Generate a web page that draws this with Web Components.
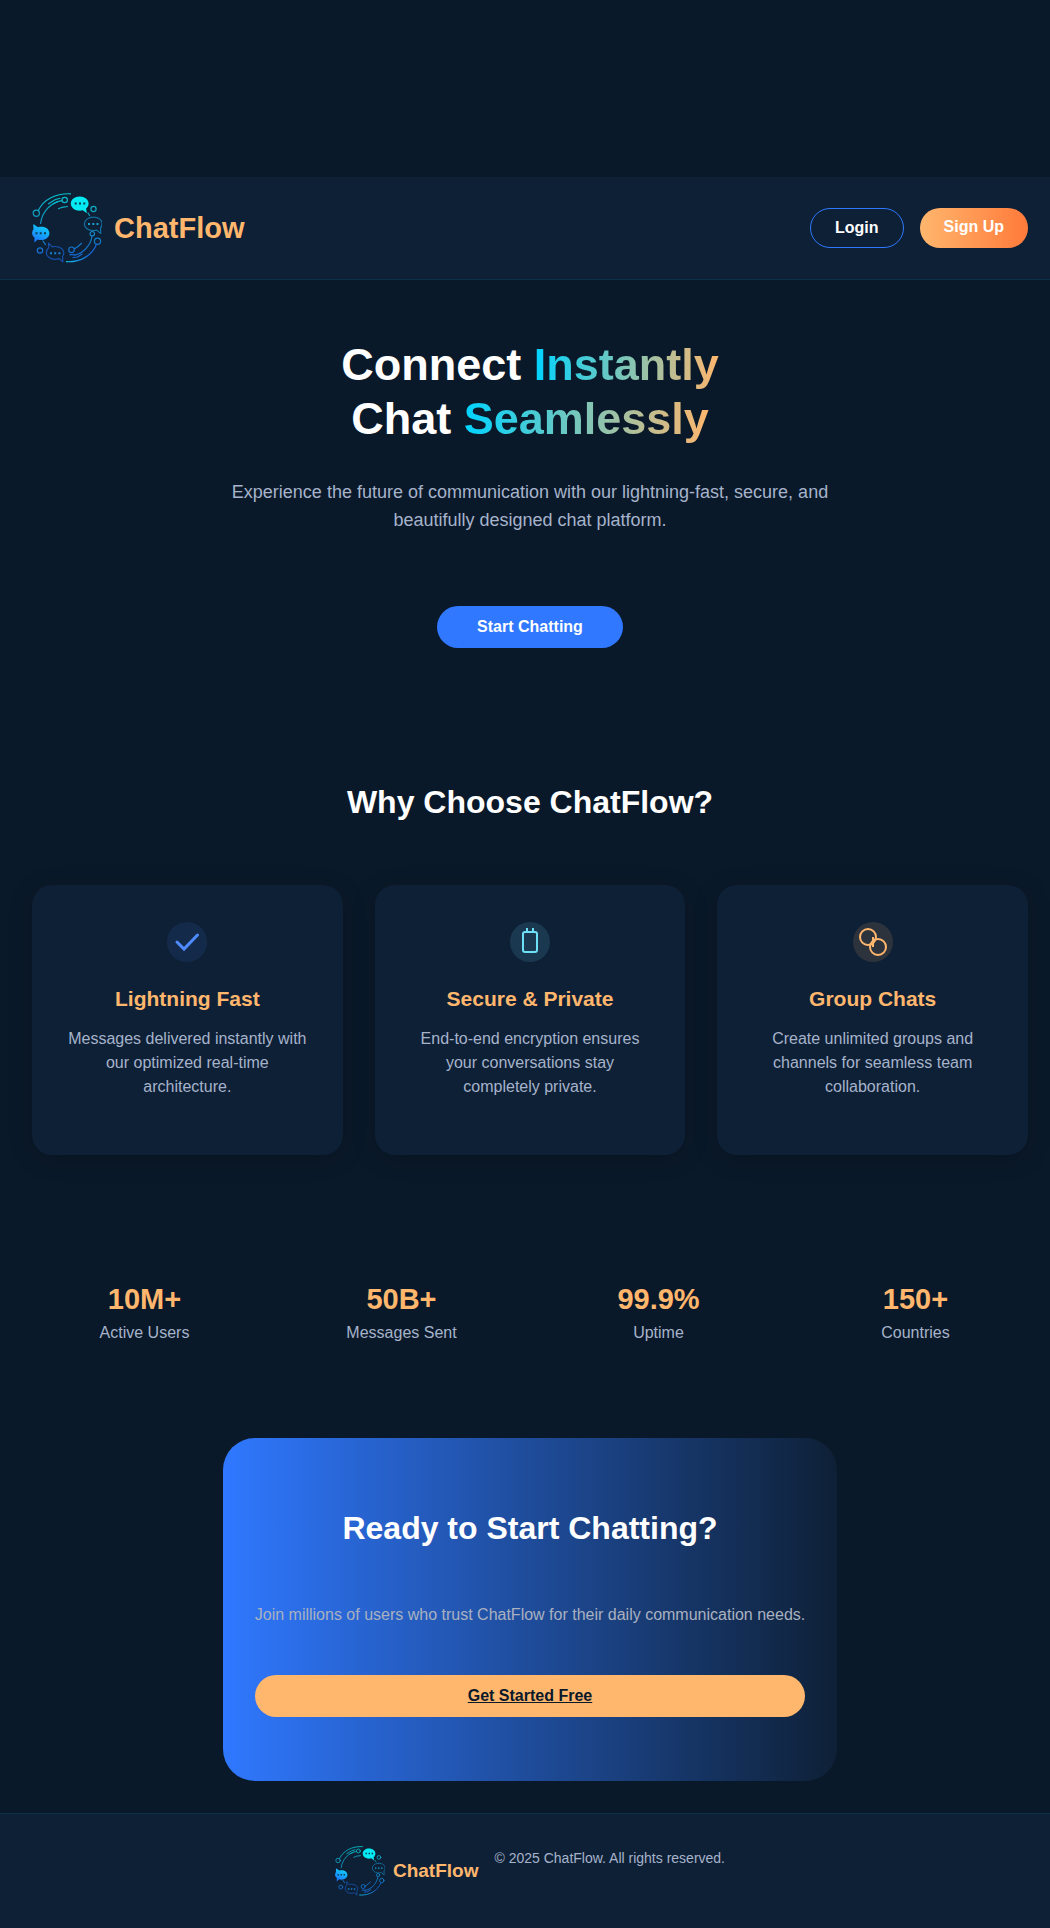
<!DOCTYPE html>
<html lang="en">
<head>
<meta charset="utf-8">
<meta name="viewport" content="width=device-width, initial-scale=1">
<title>ChatFlow</title>
<style>
  :root {
    --bg: #0a1929;
    --panel: #0e2036;
    --line: rgba(0, 212, 255, 0.1);
    --accent: #ffb66d;
    --blue: #2f78ff;
    --cyan: #00d4ff;
    --muted: #a6b3cb;
    --pad-start: 32px;
    --pad-end: 22px;
  }
  body {
    margin: 0;
    background: var(--bg);
    color: #fff;
    font: 16px/24px "Liberation Sans", Arial, sans-serif;
  }
</style>
</head>
<body>
<chat-page></chat-page>

<script>
const define = (name, html, setup) => {
  const template = document.createElement('template');
  template.innerHTML = html;
  customElements.define(name, class extends HTMLElement {
    constructor() {
      super();
      this.attachShadow({ mode: 'open' }).append(template.content.cloneNode(true));
    }
    connectedCallback() {
      if (setup) setup(this, this.shadowRoot);
    }
  });
};

define('chat-logo', `
  <style>
    :host { display: block; width: 70px; height: 70px; flex: none; }
    svg { display: block; width: 100%; height: 100%; }
  </style>
  <svg viewBox="0 0 70 70" fill="none" stroke-linecap="round" stroke-linejoin="round" aria-hidden="true">
    <defs>
      <linearGradient id="ring" gradientUnits="userSpaceOnUse" x1="0" y1="0" x2="0" y2="70">
        <stop offset="0" stop-color="#06c4ca"/><stop offset=".5" stop-color="#1488bd"/><stop offset="1" stop-color="#1763d6"/>
      </linearGradient>
      <linearGradient id="left" gradientUnits="userSpaceOnUse" x1="12" y1="32" x2="4" y2="49">
        <stop offset="0" stop-color="#0fd0fa"/><stop offset="1" stop-color="#1c74ff"/>
      </linearGradient>
      <linearGradient id="tail" gradientUnits="userSpaceOnUse" x1="34" y1="0" x2="60" y2="0">
        <stop offset="0" stop-color="#10c0e8"/><stop offset="1" stop-color="#1763d6"/>
      </linearGradient>
    </defs>
    <g stroke="url(#ring)" stroke-width="1.2">
      <path d="M38.500 .8C24 .2 11.500 6.500 6.300 17.500"/>
      <circle cx="4.300" cy="20.300" r="3.100"/>
      <path d="M8.600 30.500C10 19 18.500 9.500 29.800 7.600"/>
      <circle cx="32.700" cy="7" r="2.700"/>
      <path d="M16.500 10.800 23 6.800 28 5.300M26.500 15.800 30 14.300 35.500 13.500M21 11 25.500 8.600"/>
      <circle cx="61.500" cy="16" r="2.600"/>
      <path d="M56 20 57.600 22.500"/>
      <path d="M61.500 24.200c5.500 0 8.700 3 8.500 6.700-.1 2-.6 3-1.500 4.100l.3 5.500-4-3.300c-1.200.3-2.400.4-3.600.4-5 0-8.800-2.900-8.800-6.700s3.800-6.700 9.100-6.700Z" stroke="#126f9f"/>
      <circle cx="60.300" cy="40.700" r="2.200"/>
      <path d="M60 43.500C58.500 52 52 60 43 62"/>
      <circle cx="65.500" cy="48.300" r="3.100"/>
      <path d="M64.300 51.700C60 62 49 69.500 34.500 68.700" stroke="url(#tail)"/>
      <circle cx="39.500" cy="56.800" r="2.800"/>
      <path d="M42.500 55.800 46 53.600 49.500 50.300M38 61.700 43 61.900M41 64.500 45.500 64 50 61"/>
      <circle cx="8" cy="57.500" r="2.700"/>
      <path d="M11 48 13.500 51.600"/>
      <path d="M16.500 50.200 16.700 54.700C15 56.300 14.200 58 14.400 60c.3 3.700 4 6.300 8.500 6.300 1.500 0 3-.3 4.300-.7l3.600 3.200-.2-5.500c.9-1.400 1.200-2.400 1.200-3.500-.1-3.800-4-6.300-8.600-6.300-1.100 0-2 .1-2.900.4Z" stroke="#1650a8"/>
    </g>
    <path d="M47.700 3.500c5 0 8.900 3 8.900 7 0 2-.9 3.800-2.500 5.100l.7 4.600-4-2.900c-1 .2-2 .4-3.100.4-5 0-8.900-3.100-8.900-7.200s3.900-7 8.900-7Z" fill="#04e9f2"/>
    <path d="M1.300 31 6 34.200c1-.3 2-.4 3.200-.4 4.700 0 8.200 2.700 8.200 6.500s-3.500 6.800-8.300 6.800c-1.200 0-2.300-.1-3.300-.5L2.300 49.600 2.600 44.800C1 43.300.1 41.800.1 40.200c0-1.400.5-2.600 1.300-3.700Z" fill="url(#left)"/>
    <g fill="#0b3c55">
      <path d="M42.700 9.500h2v2h-2zM47 9.500h2v2h-2zM51.300 9.500h2v2h-2zM3.500 39.300h2v2h-2zM7.700 39.300h2v2h-2zM12 39.300h2v2h-2z"/>
      <path d="M56 30h2v2h-2zM60.300 30h2v2h-2zM64.500 30h2v2h-2z" fill="#18a0cf"/>
      <path d="M18 59.200h2v2h-2zM22.200 59.200h2v2h-2zM26.400 59.200h2v2h-2z" fill="#1a80cf"/>
    </g>
  </svg>`);

define('chat-header', `
  <style>
    :host {
      display: flex; align-items: center; justify-content: space-between;
      padding: 16px var(--pad-end) 16px var(--pad-start);
      background: var(--panel); border-bottom: 1px solid var(--line);
    }
    .brand { display: flex; align-items: center; gap: 12px; color: var(--accent); font-size: 29px; font-weight: 700; }
    nav { display: flex; gap: 16px; }
    a {
      padding: 10px 24px; border-radius: 20px; color: #fff;
      font-weight: 700; line-height: 18px; text-decoration: none;
    }
    .login { border: 1px solid var(--blue); }
    .signup { background: linear-gradient(90deg, #ffb66d, #ff7a3a); }
  </style>
  <div class="brand"><chat-logo></chat-logo><span>ChatFlow</span></div>
  <nav>
    <a class="login" href="#login">Login</a>
    <a class="signup" href="#signup">Sign Up</a>
  </nav>`);

define('chat-hero', `
  <style>
    :host { display: block; padding: 58px var(--pad-end) 71px var(--pad-start); text-align: center; }
    h1 { margin: 0; font-size: 45px; line-height: 54px; }
    h1 span { background: linear-gradient(90deg, var(--cyan), var(--accent)); -webkit-background-clip: text; background-clip: text; color: transparent; }
    p { max-width: 600px; margin: 32px auto 72px; color: var(--muted); font-size: 18px; line-height: 28px; }
    button {
      padding: 12px 40px; border: 0; border-radius: 21px; background: var(--blue); color: #fff;
      font: inherit; font-weight: 700; line-height: 18px;
    }
  </style>
  <h1>Connect <span>Instantly</span><br>Chat <span>Seamlessly</span></h1>
  <p>Experience the future of communication with our lightning-fast, secure, and beautifully designed chat platform.</p>
  <button type="button">Start Chatting</button>`);

define('feature-card', `
  <style>
    :host {
      display: block; padding: 37px 32px 56px; border-radius: 20px; background: var(--panel);
      box-shadow: 0 4px 24px rgba(0, 0, 0, 0.2); text-align: center;
    }
    ::slotted(svg) { display: block; width: 40px; height: 40px; margin: 0 auto; }
    h3 { margin: 24px 0 15px; color: var(--accent); font-size: 21px; line-height: 26px; }
    p { margin: 0; color: var(--muted); }
  </style>
  <slot name="icon"></slot>
  <h3></h3>
  <p><slot></slot></p>`,
  (host, root) => { root.querySelector('h3').textContent = host.getAttribute('heading'); });

define('chat-features', `
  <style>
    :host { display: block; padding: 64px var(--pad-end) 64px var(--pad-start); }
    h2 { margin: 0 0 64px; font-size: 32px; line-height: 38px; text-align: center; }
    .grid { display: grid; grid-template-columns: repeat(3, 1fr); gap: 32px; }
  </style>
  <h2>Why Choose ChatFlow?</h2>
  <div class="grid">
    <feature-card heading="Lightning Fast">
      <svg slot="icon" viewBox="0 0 40 40" fill="none" aria-hidden="true">
        <circle cx="20" cy="20" r="20" fill="#4d8bff" fill-opacity=".1"/>
        <path d="M10 20 17 27 30.500 13" stroke="#4d8bff" stroke-width="3" stroke-linecap="round"/>
      </svg>
      Messages delivered instantly with our optimized real-time architecture.
    </feature-card>
    <feature-card heading="Secure &amp; Private">
      <svg slot="icon" viewBox="0 0 40 40" fill="none" aria-hidden="true">
        <circle cx="20" cy="20" r="20" fill="#6ee0f5" fill-opacity=".13"/>
        <rect x="13" y="10" width="14" height="20" rx="2" stroke="#6ee0f5" stroke-width="2"/>
        <path d="M17 10V6M23 10V6" stroke="#6ee0f5" stroke-width="2"/>
      </svg>
      End-to-end encryption ensures your conversations stay completely private.
    </feature-card>
    <feature-card heading="Group Chats">
      <svg slot="icon" viewBox="0 0 40 40" fill="none" aria-hidden="true">
        <circle cx="20" cy="20" r="20" fill="#ffb66d" fill-opacity=".13"/>
        <path d="M20 15v10" stroke="#ffb66d" stroke-width="2"/>
        <circle cx="15" cy="15" r="8" stroke="#ffb66d" stroke-width="2"/>
        <circle cx="25" cy="25" r="8" stroke="#ffb66d" stroke-width="2"/>
      </svg>
      Create unlimited groups and channels for seamless team collaboration.
    </feature-card>
  </div>`);

define('stat-item', `
  <style>
    :host { display: block; text-align: center; }
    strong { display: block; color: var(--accent); font-size: 29px; line-height: 44px; }
    span { display: block; color: var(--muted); }
  </style>
  <strong></strong>
  <span><slot></slot></span>`,
  (host, root) => { root.querySelector('strong').textContent = host.getAttribute('value'); });

define('chat-stats', `
  <style>
    :host {
      display: grid; grid-template-columns: repeat(4, 1fr); gap: 32px;
      padding: 58px var(--pad-end) 64px var(--pad-start);
    }
  </style>
  <stat-item value="10M+">Active Users</stat-item>
  <stat-item value="50B+">Messages Sent</stat-item>
  <stat-item value="99.9%">Uptime</stat-item>
  <stat-item value="150+">Countries</stat-item>`);

define('chat-cta', `
  <style>
    :host { display: flex; justify-content: center; padding: 29px var(--pad-end) 32px var(--pad-start); }
    section {
      display: flex; flex-direction: column; padding: 71px 32px 64px; border-radius: 32px;
      background: linear-gradient(90deg, var(--blue), var(--panel)); text-align: center;
    }
    h2 { margin: 0; font-size: 32px; line-height: 38px; }
    p { margin: 56px 0 48px; color: #a9b1c0; }
    a {
      padding: 12px 40px; border-radius: 21px; background: var(--accent);
      color: var(--bg); font-weight: 700; line-height: 18px;
    }
  </style>
  <section>
    <h2>Ready to Start Chatting?</h2>
    <p>Join millions of users who trust ChatFlow for their daily communication needs.</p>
    <a href="#signup">Get Started Free</a>
  </section>`);

define('chat-footer', `
  <style>
    :host {
      display: flex; justify-content: center; gap: 16px;
      padding: 32px var(--pad-end) 32px var(--pad-start);
      background: var(--panel); border-top: 1px solid var(--line);
    }
    .brand { display: flex; align-items: center; gap: 8px; color: var(--accent); font-size: 19px; font-weight: 700; }
    chat-logo { width: 50px; height: 50px; }
    p { margin: 0; color: var(--muted); font-size: 14px; }
  </style>
  <div class="brand"><chat-logo></chat-logo><span>ChatFlow</span></div>
  <p>© 2025 ChatFlow. All rights reserved.</p>`);

define('chat-page', `
  <style>
    :host { display: block; padding-top: 177px; }
    header, main, footer { display: block; }
  </style>
  <header><chat-header></chat-header></header>
  <main>
    <chat-hero></chat-hero>
    <chat-features></chat-features>
    <chat-stats></chat-stats>
    <chat-cta></chat-cta>
  </main>
  <footer><chat-footer></chat-footer></footer>`);
</script>
</body>
</html>
